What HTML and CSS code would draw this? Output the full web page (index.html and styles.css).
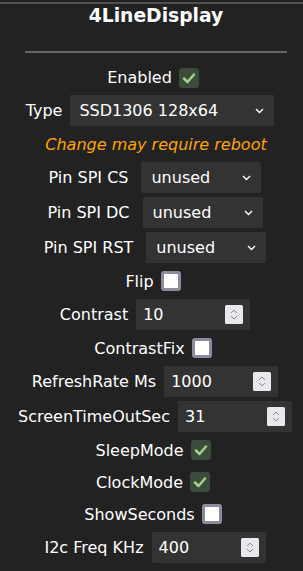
FILE: index.html
```html
<!doctype html>
<html lang="en">
<head>
    <meta charset="UTF-8" />
    <meta name="viewport" content="width=device-width, initial-scale=1.0" />
    <title>4LineDisplay</title>
    <link rel="stylesheet" href="styles.css">
</head>
<body>
    <div class="topline"></div>
    <div class="page">
        <h3>4LineDisplay</h3>
        <div class="rule"></div>

        <div class="row check first">
            <span>Enabled</span>
            <span class="cb on"><svg width="20" height="20" viewBox="0 0 20 20"><path d="M5 10.5 L8.5 14 L15 6.5" /></svg></span>
        </div>

        <div class="row field type">
            <span>Type</span>
            <div class="select wide">
                <span>SSD1306 128x64</span>
                <svg width="9" height="6" viewBox="0 0 9 6"><path d="M1 1 L4.5 4.5 L8 1" /></svg>
            </div>
        </div>

        <div class="row note">
            <i>Change may require reboot</i>
        </div>

        <div class="row field pin">
            <span>Pin SPI CS</span>
            <div class="select">
                <span>unused</span>
                <svg width="9" height="6" viewBox="0 0 9 6"><path d="M1 1 L4.5 4.5 L8 1" /></svg>
            </div>
        </div>

        <div class="row field pin">
            <span>Pin SPI DC</span>
            <div class="select">
                <span>unused</span>
                <svg width="9" height="6" viewBox="0 0 9 6"><path d="M1 1 L4.5 4.5 L8 1" /></svg>
            </div>
        </div>

        <div class="row field pin">
            <span>Pin SPI RST</span>
            <div class="select">
                <span>unused</span>
                <svg width="9" height="6" viewBox="0 0 9 6"><path d="M1 1 L4.5 4.5 L8 1" /></svg>
            </div>
        </div>

        <div class="row check">
            <span>Flip</span>
            <span class="cb"></span>
        </div>

        <div class="row field">
            <span>Contrast</span>
            <div class="num">
                <span>10</span>
                <svg class="spin" width="18" height="19" viewBox="0 0 18 19"><rect width="18" height="19" rx="1.5" /><path d="M6 8 L9 5 L12 8 M6 11 L9 14 L12 11" /></svg>
            </div>
        </div>

        <div class="row check">
            <span>ContrastFix</span>
            <span class="cb"></span>
        </div>

        <div class="row field">
            <span>RefreshRate Ms</span>
            <div class="num">
                <span>1000</span>
                <svg class="spin" width="18" height="19" viewBox="0 0 18 19"><rect width="18" height="19" rx="1.5" /><path d="M6 8 L9 5 L12 8 M6 11 L9 14 L12 11" /></svg>
            </div>
        </div>

        <div class="row field">
            <span>ScreenTimeOutSec</span>
            <div class="num">
                <span>31</span>
                <svg class="spin" width="18" height="19" viewBox="0 0 18 19"><rect width="18" height="19" rx="1.5" /><path d="M6 8 L9 5 L12 8 M6 11 L9 14 L12 11" /></svg>
            </div>
        </div>

        <div class="row check">
            <span>SleepMode</span>
            <span class="cb on"><svg width="20" height="20" viewBox="0 0 20 20"><path d="M5 10.5 L8.5 14 L15 6.5" /></svg></span>
        </div>

        <div class="row check">
            <span>ClockMode</span>
            <span class="cb on"><svg width="20" height="20" viewBox="0 0 20 20"><path d="M5 10.5 L8.5 14 L15 6.5" /></svg></span>
        </div>

        <div class="row check">
            <span>ShowSeconds</span>
            <span class="cb"></span>
        </div>

        <div class="row field">
            <span>I2c Freq KHz</span>
            <div class="num">
                <span>400</span>
                <svg class="spin" width="18" height="19" viewBox="0 0 18 19"><rect width="18" height="19" rx="1.5" /><path d="M6 8 L9 5 L12 8 M6 11 L9 14 L12 11" /></svg>
            </div>
        </div>
    </div>
</body>
</html>
```

FILE: styles.css
```css
* {
    margin: 0;
    padding: 0;
    box-sizing: border-box;
}

body {
    font-family: "DejaVu Sans", Verdana, sans-serif;
    font-size: 16px;
    background: #222;
    color: #fff;
}

.topline {
    height: 2px;
    margin-top: 2px;
    background: #4f4f4f;
}

.page {
    padding-left: 9px;
    text-align: center;
}

h3 {
    font-size: 18.72px;
    line-height: 24px;
    font-weight: bold;
}

.rule {
    width: 262px;
    height: 2px;
    margin: 23px auto 9px;
    background: #666;
}

.row {
    display: flex;
    justify-content: center;
    align-items: center;
    gap: 8px;
}

.row.check {
    height: 32px;
    gap: 7px;
}

.row.check.first {
    height: 31px;
}

.row.field {
    height: 35px;
}

.row.note {
    height: 32px;
    color: #ffa500;
}

.row.pin {
    gap: 13px;
}

.cb {
    width: 20px;
    height: 20px;
    margin-right: 6px;
    border-radius: 3px;
    background: #fff;
    border: 3px solid #8d8b9b;
}

.cb.on {
    background: #3c4c3a;
    border: none;
}

.cb svg {
    display: block;
}

.cb path {
    fill: none;
    stroke: #a6d18a;
    stroke-width: 2.5;
    stroke-linecap: round;
    stroke-linejoin: round;
}

.select,
.num {
    display: flex;
    align-items: center;
    justify-content: space-between;
    height: 31px;
    background: #333;
    border-radius: 1px;
}

.select {
    width: 120px;
    padding: 0 10px 0 10px;
    margin-right: 2px;
}

.select.wide {
    width: 204px;
    padding-left: 9px;
    margin-right: 12px;
}

.select path {
    fill: none;
    stroke: #fff;
    stroke-width: 1.4;
}

.num {
    width: 114px;
    padding: 0 7px;
    margin-right: 2px;
}

.spin rect {
    fill: #e9e9ed;
}

.spin path {
    fill: none;
    stroke: #8a8a90;
    stroke-width: 1;
}
```
